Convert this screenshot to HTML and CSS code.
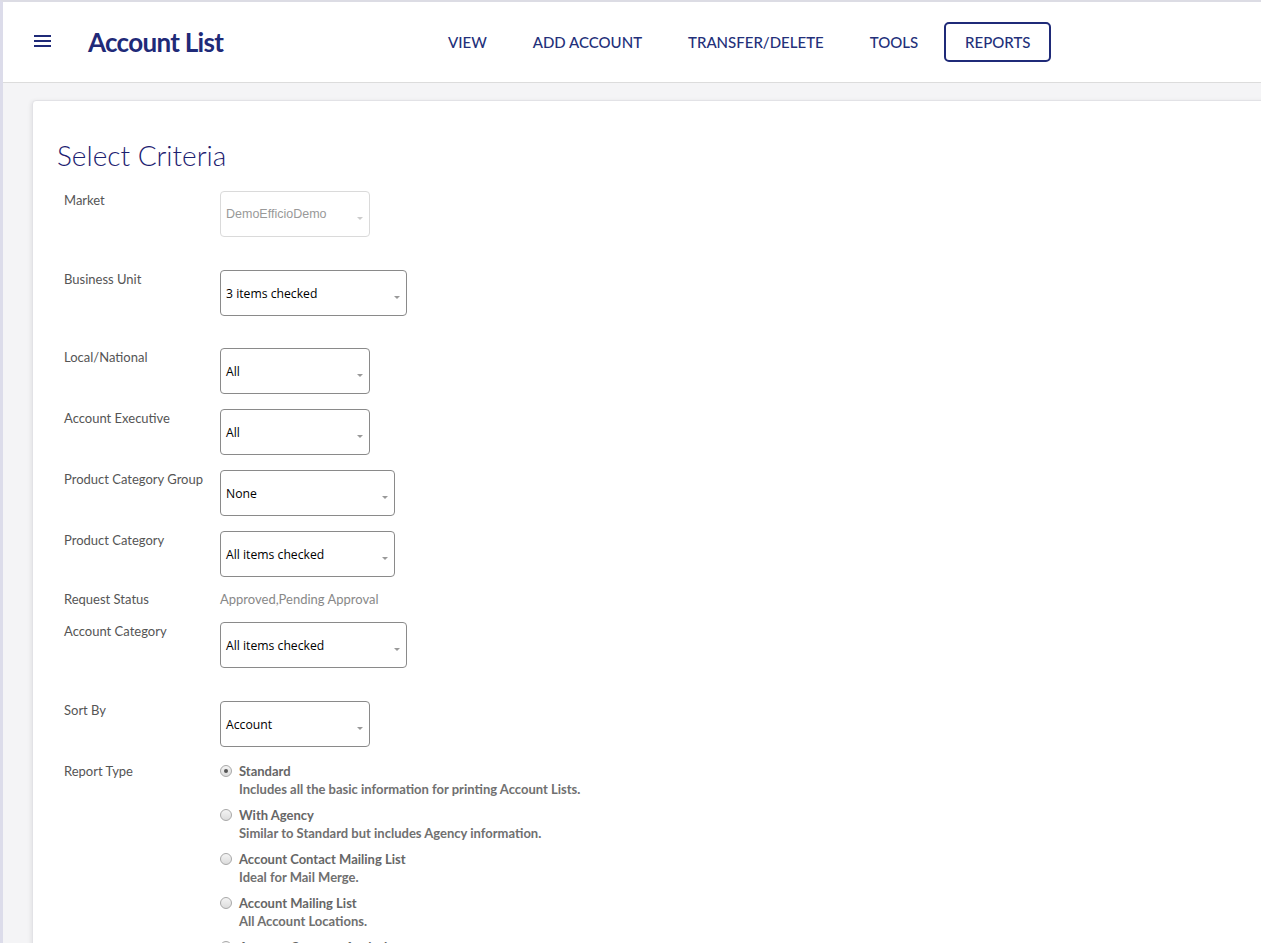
FILE: index.html
```html
<!DOCTYPE html>
<html lang="en">
<head>
    <meta charset="UTF-8">
    <title>Account List</title>
    <link rel="stylesheet" href="styles.css">
</head>
<body>
    <header class="topbar">
        <button class="menu-btn" aria-label="Menu">
            <svg width="17" height="12" viewBox="0 0 17 12">
                <rect x="0" y="0" width="17" height="2" fill="#1f2a78"/>
                <rect x="0" y="5" width="17" height="2" fill="#1f2a78"/>
                <rect x="0" y="10" width="17" height="2" fill="#1f2a78"/>
            </svg>
        </button>
        <h1 class="page-title">Account List</h1>
        <nav class="main-nav">
            <a href="#">VIEW</a>
            <a href="#">ADD ACCOUNT</a>
            <a href="#">TRANSFER/DELETE</a>
            <a href="#">TOOLS</a>
            <a href="#" class="active">REPORTS</a>
        </nav>
    </header>

    <main class="content">
        <section class="card">
            <h2 class="card-title">Select Criteria</h2>

            <div class="row spaced">
                <label class="field-label">Market</label>
                <div class="select disabled w150"><span>DemoEfficioDemo</span><i class="caret"></i></div>
            </div>
            <div class="row spaced-sm">
                <label class="field-label">Business Unit</label>
                <div class="select w187"><span>3 items checked</span><i class="caret"></i></div>
            </div>
            <div class="row">
                <label class="field-label">Local/National</label>
                <div class="select w150"><span>All</span><i class="caret"></i></div>
            </div>
            <div class="row">
                <label class="field-label">Account Executive</label>
                <div class="select w150"><span>All</span><i class="caret"></i></div>
            </div>
            <div class="row">
                <label class="field-label">Product Category Group</label>
                <div class="select w175"><span>None</span><i class="caret"></i></div>
            </div>
            <div class="row">
                <label class="field-label">Product Category</label>
                <div class="select w175"><span>All items checked</span><i class="caret"></i></div>
            </div>
            <div class="row text-row">
                <label class="field-label">Request Status</label>
                <div class="static-value">Approved,Pending Approval</div>
            </div>
            <div class="row spaced">
                <label class="field-label">Account Category</label>
                <div class="select w187"><span>All items checked</span><i class="caret"></i></div>
            </div>
            <div class="row">
                <label class="field-label">Sort By</label>
                <div class="select w150"><span>Account</span><i class="caret"></i></div>
            </div>
            <div class="row">
                <label class="field-label">Report Type</label>
                <div class="radio-list">
                    <div class="radio-item">
                        <span class="radio checked"></span>
                        <div>
                            <div class="radio-name">Standard</div>
                            <div class="radio-desc">Includes all the basic information for printing Account Lists.</div>
                        </div>
                    </div>
                    <div class="radio-item">
                        <span class="radio"></span>
                        <div>
                            <div class="radio-name">With Agency</div>
                            <div class="radio-desc">Similar to Standard but includes Agency information.</div>
                        </div>
                    </div>
                    <div class="radio-item">
                        <span class="radio"></span>
                        <div>
                            <div class="radio-name">Account Contact Mailing List</div>
                            <div class="radio-desc">Ideal for Mail Merge.</div>
                        </div>
                    </div>
                    <div class="radio-item">
                        <span class="radio"></span>
                        <div>
                            <div class="radio-name">Account Mailing List</div>
                            <div class="radio-desc">All Account Locations.</div>
                        </div>
                    </div>
                    <div class="radio-item">
                        <span class="radio"></span>
                        <div>
                            <div class="radio-name">Account Category Analysis</div>
                            <div class="radio-desc">Accounts grouped by Account Category.</div>
                        </div>
                    </div>
                </div>
            </div>
        </section>
    </main>
</body>
</html>
```

FILE: styles.css
```css
html, body {
    height: 100%;
}

body {
    margin: 0;
    background: #f4f4f6;
    border-top: 2px solid #dcdce4;
    border-left: 3px solid #dcdcea;
    font-family: 'Lato', 'Liberation Sans', sans-serif;
    overflow: hidden;
}

.topbar {
    display: flex;
    align-items: center;
    height: 80px;
    background: #fff;
    border-bottom: 1px solid #dcdcdc;
    padding-left: 31px;
}

.menu-btn {
    background: none;
    border: none;
    padding: 0;
    width: 54px;
    height: 20px;
    text-align: left;
    cursor: pointer;
}

.page-title {
    margin: 0;
    width: 340px;
    font-size: 26px;
    font-weight: 700;
    color: #1f2a78;
    letter-spacing: -0.7px;
}

.main-nav {
    display: flex;
    align-items: center;
    gap: 6px;
}

.main-nav a {
    display: block;
    padding: 10px 20px;
    font-size: 15px;
    font-weight: 500;
    color: #23307a;
    text-decoration: none;
    line-height: 18px;
}

.main-nav a.active {
    border: 2px solid #1f2a78;
    border-radius: 5px;
    padding: 9px 19px;
}

.content {
    padding: 17px 0 0 29px;
}

.card {
    background: #fff;
    border: 1px solid #e2e2e6;
    border-radius: 4px;
    box-shadow: -1px 1px 4px rgba(0, 0, 0, 0.08);
    width: calc(100% + 40px);
    padding: 36px 24px 40px;
    min-height: 1000px;
}

.card-title {
    margin: 0 0 18px;
    font-size: 28px;
    font-weight: 300;
    color: #1c2170;
    line-height: 36px;
}

.row {
    display: flex;
    align-items: flex-start;
    padding-left: 7px;
    margin-bottom: 15px;
}

.row.spaced {
    margin-bottom: 33px;
}

.row.spaced-sm {
    margin-bottom: 32px;
}

.row.text-row {
    margin-top: -2px;
    margin-bottom: 14px;
}

.field-label {
    width: 156px;
    flex: 0 0 156px;
    font-size: 13px;
    line-height: 18px;
    color: #555;
}

.select {
    position: relative;
    box-sizing: border-box;
    height: 46px;
    border: 1px solid #8a8a8a;
    border-radius: 4px;
    display: flex;
    align-items: center;
    padding-left: 5px;
    font-family: 'Open Sans', 'Liberation Sans', sans-serif;
    font-size: 12.2px;
    color: #000;
}

.select.disabled {
    border-color: #dadada;
    color: #999;
    font-family: 'Liberation Sans', Arial, sans-serif;
    font-size: 12.5px;
}

.w150 { width: 150px; }
.w175 { width: 175px; }
.w187 { width: 187px; }

.caret {
    position: absolute;
    right: 6px;
    top: 25px;
    width: 0;
    height: 0;
    border-left: 3px solid transparent;
    border-right: 3px solid transparent;
    border-top: 3px solid #999;
}

.select.disabled .caret {
    border-top-color: #ccc;
}

.static-value {
    font-size: 13px;
    line-height: 18px;
    color: #888;
}

.radio-list {
    display: flex;
    flex-direction: column;
    gap: 8px;
}

.radio-item {
    display: flex;
    align-items: flex-start;
    font-size: 13px;
    line-height: 18px;
    font-weight: 700;
    color: #6b6b6b;
}

.radio {
    flex: 0 0 auto;
    box-sizing: border-box;
    width: 12px;
    height: 12px;
    margin: 3px 7px 0 0;
    border: 1px solid #a8a8a8;
    border-radius: 50%;
    background: linear-gradient(#f4f4f4, #dcdcdc);
    position: relative;
}

.radio.checked::after {
    content: "";
    position: absolute;
    left: 3px;
    top: 3px;
    width: 4px;
    height: 4px;
    border-radius: 50%;
    background: #555;
}

.radio-name {
    color: #666;
}

.radio-desc {
    color: #707070;
}
```
